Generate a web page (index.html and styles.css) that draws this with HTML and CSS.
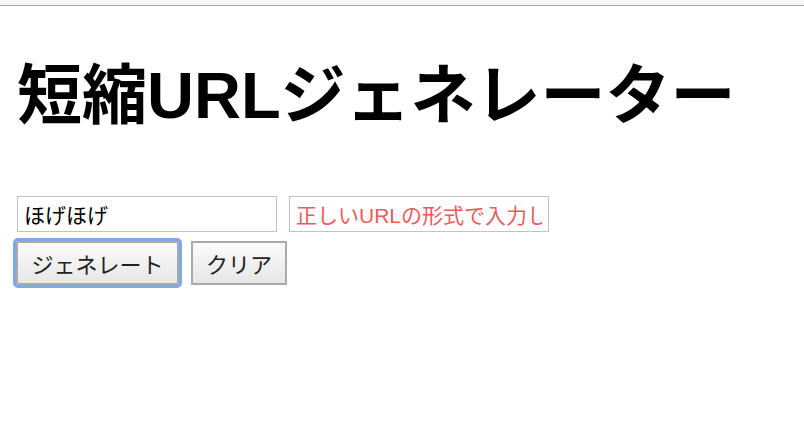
FILE: index.html
```html
<!DOCTYPE html>
<html lang="ja">
<head>
    <meta charset="UTF-8">
    <meta name="viewport" content="width=device-width, initial-scale=1.0">
    <title>短縮URLジェネレーター</title>
    <link rel="stylesheet" href="styles.css">
</head>
<body>
    <div class="topbar"></div>
    <div id="container">
        <h1 class="title">短縮URLジェネレーター</h1>
        <div class="fields">
            <input type="text" class="field" value="ほげほげ">
            <input type="text" class="field error" value="正しいURLの形式で入力してください" readonly>
        </div>
        <div class="actions">
            <button class="btn focused">ジェネレート</button>
            <button class="btn">クリア</button>
        </div>
    </div>
</body>
</html>
```

FILE: styles.css
```css
body {
    font-family: "Liberation Sans", "Noto Sans CJK JP", sans-serif;
    background-color: #ffffff;
    color: #000000;
    margin: 0;
}
.topbar {
    height: 5px;
    background-color: #f4f6f3;
    border-bottom: 1px solid #a9a9a9;
}
#container {
    padding: 0 17px 20px 17px;
}
.title {
    font-size: 65px;
    font-weight: bold;
    line-height: 80px;
    margin: 50px 0 60px 0;
}
.fields {
    display: flex;
    align-items: flex-start;
    gap: 12px;
}
.field {
    width: 260px;
    height: 36px;
    box-sizing: border-box;
    border: 1px solid #c2c2c2;
    padding: 0 6px;
    font-family: inherit;
    font-size: 21px;
    color: #000000;
    outline: none;
}
.error {
    color: #e85c5c;
}
.actions {
    display: flex;
    align-items: flex-start;
    gap: 12px;
    margin-top: 9px;
    margin-left: -1px;
}
.btn {
    height: 44px;
    box-sizing: border-box;
    padding: 0 13px;
    font-family: inherit;
    font-size: 22px;
    color: #222222;
    background: linear-gradient(#fbfbfb, #e6e6e6);
    border: 2px solid #a9a9a9;
    cursor: pointer;
}
.focused {
    width: 163px;
    outline: 3px solid #7fa8ea;
    outline-offset: 0;
    border-radius: 2px;
}
```
